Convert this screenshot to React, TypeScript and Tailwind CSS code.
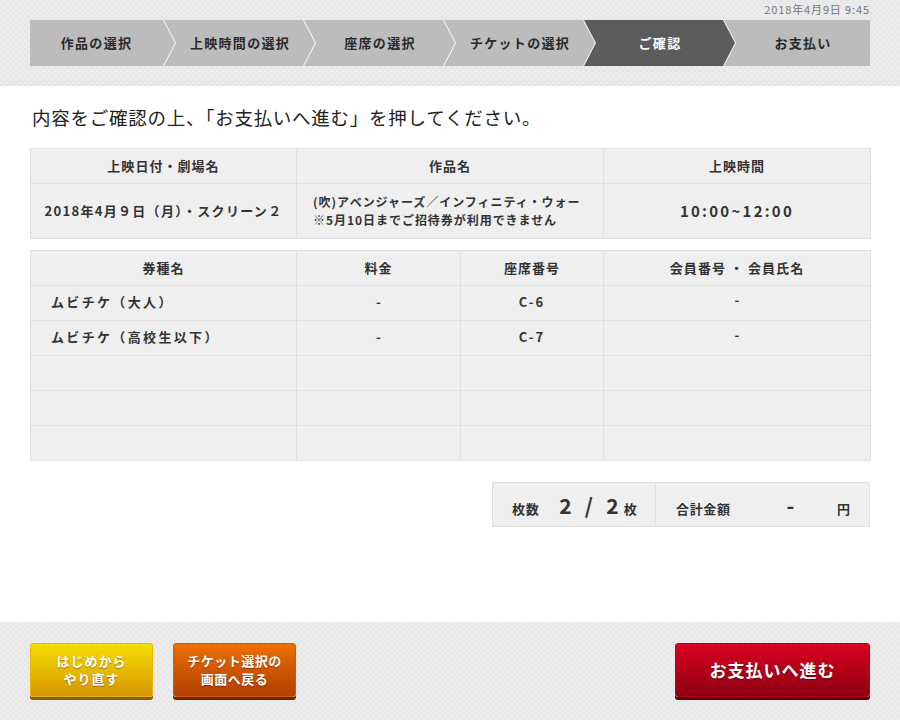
import React from "react";

const steps = ["作品の選択", "上映時間の選択", "座席の選択", "チケットの選択", "ご確認", "お支払い"];

const tickets = [
  { name: "ムビチケ（大人）", price: "-", seat: "C-6", member: "-" },
  { name: "ムビチケ（高校生以下）", price: "-", seat: "C-7", member: "-" },
  { name: "", price: "", seat: "", member: "" },
  { name: "", price: "", seat: "", member: "" },
  { name: "", price: "", seat: "", member: "" },
];

function stepClip(i: number, last: boolean) {
  if (i === 0) return "polygon(0 0, 133px 0, 145px 50%, 133px 100%, 0 100%)";
  if (last) return "polygon(0 0, 100% 0, 100% 100%, 0 100%, 12px 50%)";
  return "polygon(0 0, 139px 0, 151px 50%, 139px 100%, 0 100%, 12px 50%)";
}

const pattern =
  "bg-[#eaeaea] bg-[image:repeating-conic-gradient(#ececec_0_25%,#e7e7e7_0_50%)] bg-[length:6px_6px]";

export default function App() {
  return (
    <div className="w-[900px] h-[720px] flex flex-col font-['Noto_Sans_CJK_JP','Noto_Sans',sans-serif] text-[#333]">
      {/* header / stepper */}
      <div className={`h-[86px] ${pattern}`}>
        <div className="h-[20px] leading-[18px] pr-[30px] text-right text-[11px] text-[#777] tracking-[0.08em]">2018年4月9日 9:45</div>
        <div className="mx-[30px] flex h-[46px] bg-white/80">
          {steps.map((s, i) => {
            const last = i === steps.length - 1;
            const active = i === 4;
            const w = i === 0 ? "w-[145px]" : last ? "w-[146px]" : "w-[151px]";
            return (
              <div
                key={s}
                className={`${w} ${i > 0 ? "-ml-[11px]" : ""} h-full flex items-center ${
                  active ? "bg-[#5c5c5c] text-white" : "bg-[#bcbcbc] text-[#2a2a2a]"
                }`}
                style={{ clipPath: stepClip(i, last) }}
              >
                <span
                  className={`${i === 0 ? "w-[133px]" : last ? "w-full pl-[12px]" : "w-[140px] pl-[12px]"} text-center text-[13px] font-bold tracking-[0.1em]`}
                >
                  {s}
                </span>
              </div>
            );
          })}
        </div>
      </div>

      {/* main */}
      <div className="h-[536px] bg-white px-[30px] pt-[17px]">
        <h1 className="text-[18.5px] leading-[28px] text-[#222] tracking-[0.04em] pl-[2px]">
          内容をご確認の上、「お支払いへ進む」を押してください。
        </h1>

        <table className="mt-[17px] w-[840px] border-collapse bg-[#efefef] text-[13px] font-bold table-fixed">
          <colgroup>
            <col className="w-[266px]" />
            <col className="w-[307px]" />
            <col className="w-[267px]" />
          </colgroup>
          <thead>
            <tr className="h-[35px]">
              <th className="border border-[#e0e0e0] tracking-[0.08em]">上映日付・劇場名</th>
              <th className="border border-[#e0e0e0] tracking-[0.08em]">作品名</th>
              <th className="border border-[#e0e0e0] tracking-[0.08em]">上映時間</th>
            </tr>
          </thead>
          <tbody>
            <tr className="h-[55px]">
              <td className="border border-[#e0e0e0] text-center tracking-[0.1em]">2018年4月９日（月）・スクリーン２</td>
              <td className="border border-[#e0e0e0] pl-[16px] text-[12px] tracking-[0.08em]">
                <div className="leading-[18px]">(吹)アベンジャーズ／インフィニティ・ウォー</div>
                <div className="leading-[18px]">※5月10日までご招待券が利用できません</div>
              </td>
              <td className="border border-[#e0e0e0] text-center text-[15px] tracking-[0.15em]">10:00~12:00</td>
            </tr>
          </tbody>
        </table>

        <table className="mt-[11px] w-[840px] border-collapse bg-[#efefef] text-[13px] font-bold table-fixed">
          <colgroup>
            <col className="w-[266px]" />
            <col className="w-[164px]" />
            <col className="w-[143px]" />
            <col className="w-[267px]" />
          </colgroup>
          <thead>
            <tr className="h-[35px]">
              <th className="border border-[#e0e0e0] tracking-[0.08em]">券種名</th>
              <th className="border border-[#e0e0e0] tracking-[0.08em]">料金</th>
              <th className="border border-[#e0e0e0] tracking-[0.08em]">座席番号</th>
              <th className="border border-[#e0e0e0] tracking-[0.08em]">会員番号 ・ 会員氏名</th>
            </tr>
          </thead>
          <tbody>
            {tickets.map((t, i) => (
              <tr key={i} className="h-[35px] align-top">
                <td className="border border-[#e0e0e0] pl-[20px] pt-[6px] tracking-[0.18em]">{t.name}</td>
                <td className="border border-[#e0e0e0] text-center pt-[6px]">{t.price}</td>
                <td className="border border-[#e0e0e0] text-center pt-[6px] tracking-[0.15em]">{t.seat}</td>
                <td className="border border-[#e0e0e0] text-center pt-[4px]">{t.member}</td>
              </tr>
            ))}
          </tbody>
        </table>

        <div className="mt-[21px] flex justify-end">
          <div className="w-[378px] h-[45px] flex bg-[#efefef] border border-[#e0e0e0] font-bold text-[13px]">
            <div className="w-[163px] border-r border-[#e0e0e0] flex items-end pb-[8px] pl-[19px]">
              <span className="tracking-[0.05em]">枚数</span>
              <span className="ml-[20px] text-[21px] leading-[26px] tracking-[0.2em]">2 / 2</span>
              <span className="ml-[1px]">枚</span>
            </div>
            <div className="flex-1 flex items-end pb-[8px] pl-[20px]">
              <span className="tracking-[0.05em]">合計金額</span>
              <span className="ml-[56px] text-[21px] leading-[26px]">-</span>
              <span className="ml-auto mr-[19px]">円</span>
            </div>
          </div>
        </div>
      </div>

      {/* footer */}
      <div className={`h-[98px] ${pattern} flex items-start px-[30px] pt-[21px]`}>
        <button className="w-[123px] h-[54px] rounded-[3px] border border-[#e8b400] bg-gradient-to-b from-[#f3de00] to-[#d69600] shadow-[0_3px_0_#8c5a00] text-white text-[13px] font-bold leading-[18px] tracking-[0.08em] [text-shadow:0_1px_1px_rgba(90,50,0,0.5)]">
          はじめから
          <br />
          やり直す
        </button>
        <button className="ml-[20px] w-[123px] h-[54px] rounded-[3px] border border-[#d45a00] bg-gradient-to-b from-[#ec7000] to-[#b23e00] shadow-[0_3px_0_#6e2600] text-white text-[13px] font-bold leading-[18px] tracking-[0.04em] [text-shadow:0_1px_1px_rgba(70,20,0,0.5)]">
          チケット選択の
          <br />
          画面へ戻る
        </button>
        <button className="ml-auto w-[195px] h-[54px] rounded-[3px] border border-[#b8001a] bg-gradient-to-b from-[#dc0020] to-[#8c0012] shadow-[0_3px_0_#560008] text-white text-[17px] font-bold tracking-[0.06em] [text-shadow:0_1px_1px_rgba(60,0,0,0.5)]">
          お支払いへ進む
        </button>
      </div>
    </div>
  );
}
